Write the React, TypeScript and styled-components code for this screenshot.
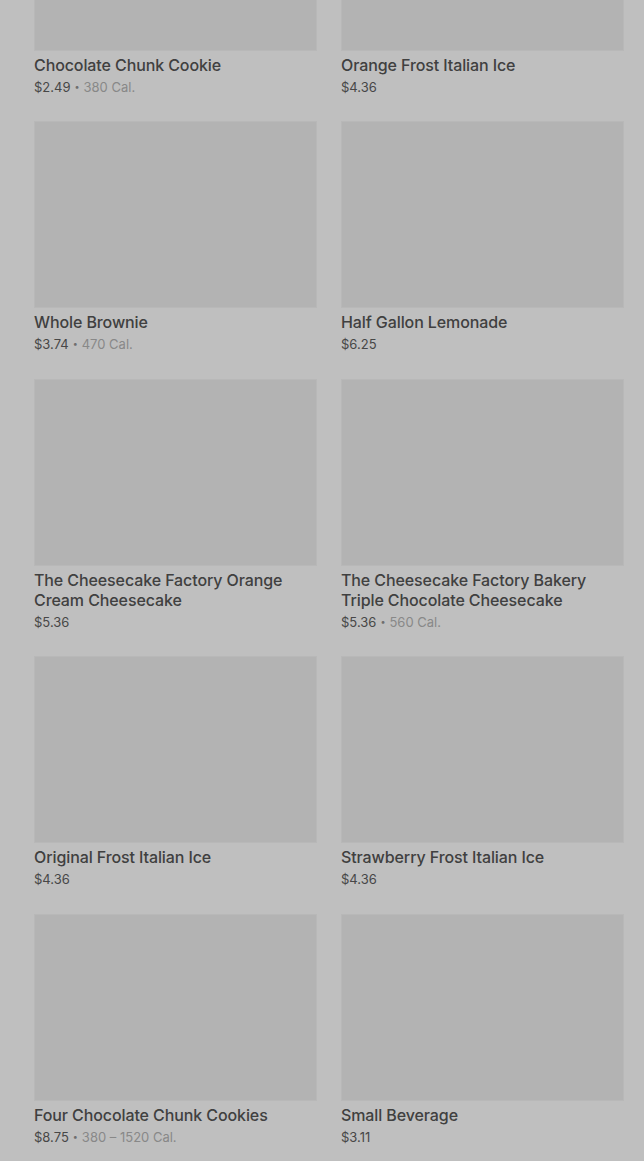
import React from 'react';
import styled, { createGlobalStyle } from 'styled-components';

type Item = {
  name: string;
  price: string;
  cal?: string;
};

const items: Item[] = [
  { name: 'Chocolate Chunk Cookie', price: '$2.49', cal: '380 Cal.' },
  { name: 'Orange Frost Italian Ice', price: '$4.36' },
  { name: 'Whole Brownie', price: '$3.74', cal: '470 Cal.' },
  { name: 'Half Gallon Lemonade', price: '$6.25' },
  { name: 'The Cheesecake Factory Orange Cream Cheesecake', price: '$5.36' },
  {
    name: 'The Cheesecake Factory Bakery Triple Chocolate Cheesecake',
    price: '$5.36',
    cal: '560 Cal.',
  },
  { name: 'Original Frost Italian Ice', price: '$4.36' },
  { name: 'Strawberry Frost Italian Ice', price: '$4.36' },
  { name: 'Four Chocolate Chunk Cookies', price: '$8.75', cal: '380 – 1520 Cal.' },
  { name: 'Small Beverage', price: '$3.11' },
];

const GlobalStyle = createGlobalStyle`
  html, body {
    margin: 0;
    padding: 0;
    background: #bfbfbf;
    overflow: hidden;
  }

  body {
    font-family: Inter, "Noto Sans", "Liberation Sans", sans-serif;
    -webkit-font-smoothing: antialiased;
  }
`;

const App: React.FC = () => (
  <>
    <GlobalStyle />
    <Viewport>
      <Grid>
        {items.map((item) => (
          <Card key={item.name}>
            <Thumb />
            <Title>{item.name}</Title>
            <Meta>
              <Price>{item.price}</Price>
              {item.cal && (
                <>
                  <Dot>•</Dot>
                  <Cal>{item.cal}</Cal>
                </>
              )}
            </Meta>
          </Card>
        ))}
      </Grid>
    </Viewport>
  </>
);

const Viewport = styled.main`
  height: 100vh;
  overflow: hidden;
`;

// list is scrolled: the first row of images is partly above the fold
const Grid = styled.section`
  display: grid;
  grid-template-columns: repeat(2, 283px);
  column-gap: 24px;
  row-gap: 24.5px;
  padding: 0 20px 0 34px;
  margin-top: -136.5px;
`;

const Card = styled.article`
  display: flex;
  flex-direction: column;
`;

const Thumb = styled.div`
  height: 187px;
  background: #b3b3b3;
  box-shadow: inset 0 0 0 1px #b8b8b8;
  margin-bottom: 4px;
`;

const Title = styled.div`
  font-size: 16px;
  line-height: 20px;
  font-weight: 500;
  color: #404040;
  letter-spacing: -0.1px;
`;

const Meta = styled.div`
  display: flex;
  align-items: center;
  margin-top: 2px;
  font-size: 13px;
  line-height: 20px;
`;

const Price = styled.span`
  color: #474747;
`;

const Dot = styled.span`
  color: #6e6e6e;
  font-size: 9px;
  margin: 0 4px;
`;

const Cal = styled.span`
  color: #888888;
`;

export default App;
